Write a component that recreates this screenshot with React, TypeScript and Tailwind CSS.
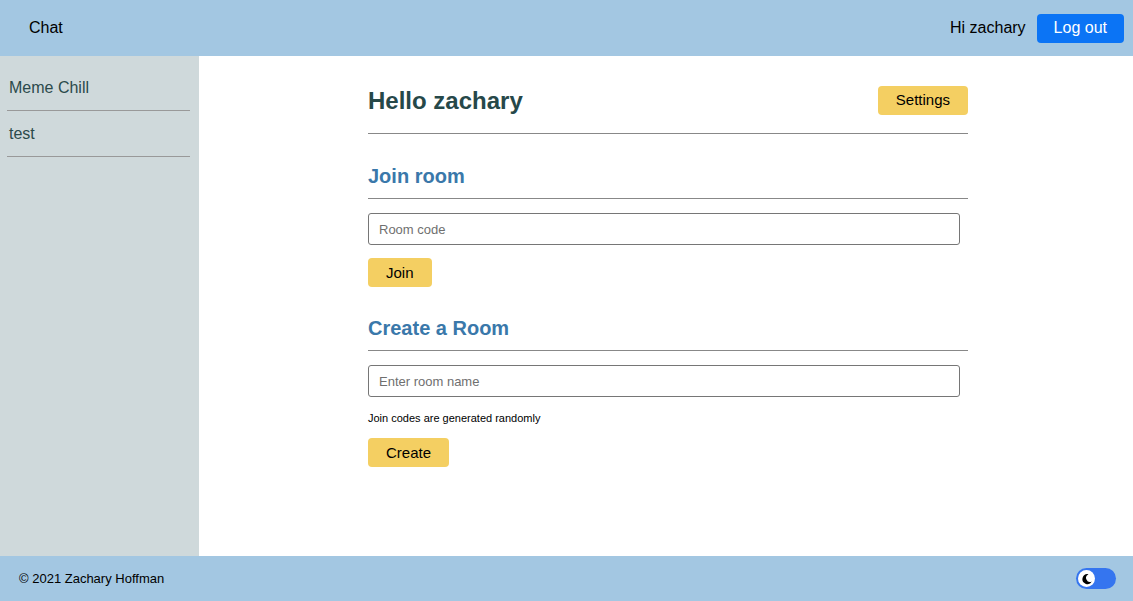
import React from "react";

export default function App() {
  return (
    <div className="flex h-[601px] w-[1133px] flex-col bg-white font-['Liberation_Sans',Arial,sans-serif]">
      <header className="flex h-[56px] shrink-0 items-center justify-between bg-[#a3c7e2] pl-[29px] pr-[9px]">
        <span className="text-[16px] text-black">Chat</span>
        <div className="flex items-center gap-[11px]">
          <span className="text-[16px] text-black">Hi zachary</span>
          <button className="h-[29px] rounded-[4px] bg-[#0b74f5] px-[17px] text-[16px] text-white">Log out</button>
        </div>
      </header>
      <div className="flex min-h-0 flex-1">
        <aside className="w-[199px] shrink-0 bg-[#cfd9db] pl-[7px] pr-[9px] pt-[9px]">
          {["Meme Chill", "test"].map((r) => (
            <div key={r} className="border-b border-[#999999] pb-[10px] pt-[11px]">
              <span className="pl-[2px] text-[16px] leading-[24px] text-[#2b4a4b]">{r}</span>
            </div>
          ))}
        </aside>
        <main className="flex-1 pl-[169px] pt-[30px]">
          <div className="w-[600px]">
            <div className="flex h-[29px] items-center justify-between">
              <h1 className="text-[24px] font-bold leading-[29px] text-[#264849]">Hello zachary</h1>
              <button className="h-[29px] rounded-[4px] bg-[#f4cf62] px-[18px] text-[15px] text-black">Settings</button>
            </div>
            <div className="mt-[18px] h-px bg-[#888888]" />
            <h2 className="mt-[30px] text-[20px] font-bold leading-[24px] text-[#3a78aa]">Join room</h2>
            <div className="mt-[10px] h-px bg-[#888888]" />
            <input
              placeholder="Room code"
              className="mt-[14px] block h-[32px] w-[592px] rounded-[3px] border border-[#767676] px-[10px] text-[13px] placeholder:text-[#6f6f6f]"
            />
            <button className="mt-[13px] h-[29px] rounded-[4px] bg-[#f4cf62] px-[18px] pt-[1px] text-[15px] text-black">Join</button>
            <h2 className="mt-[29px] text-[20px] font-bold leading-[24px] text-[#3a78aa]">Create a Room</h2>
            <div className="mt-[10px] h-px bg-[#888888]" />
            <input
              placeholder="Enter room name"
              className="mt-[14px] block h-[32px] w-[592px] rounded-[3px] border border-[#767676] px-[10px] text-[13px] placeholder:text-[#6f6f6f]"
            />
            <p className="mt-[15px] text-[11px] leading-[13px] text-black">Join codes are generated randomly</p>
            <button className="mt-[13px] h-[29px] rounded-[4px] bg-[#f4cf62] px-[18px] pt-[1px] text-[15px] text-black">Create</button>
          </div>
        </main>
      </div>
      <footer className="flex h-[45px] shrink-0 items-center justify-between bg-[#a3c7e2] pl-[19px] pr-[17px]">
        <span className="text-[13px] text-black">© 2021 Zachary Hoffman</span>
        <div className="flex h-[21px] w-[40px] items-center rounded-full bg-[#3575ef] pl-[2px]">
          <div className="flex h-[17px] w-[17px] items-center justify-center rounded-full bg-white">
            <svg width="12" height="12" viewBox="0 0 12 12">
              <path d="M7.5 1.2A5 5 0 1 0 10.8 8.6 4 4 0 0 1 7.5 1.2Z" fill="#000" />
            </svg>
          </div>
        </div>
      </footer>
    </div>
  );
}
